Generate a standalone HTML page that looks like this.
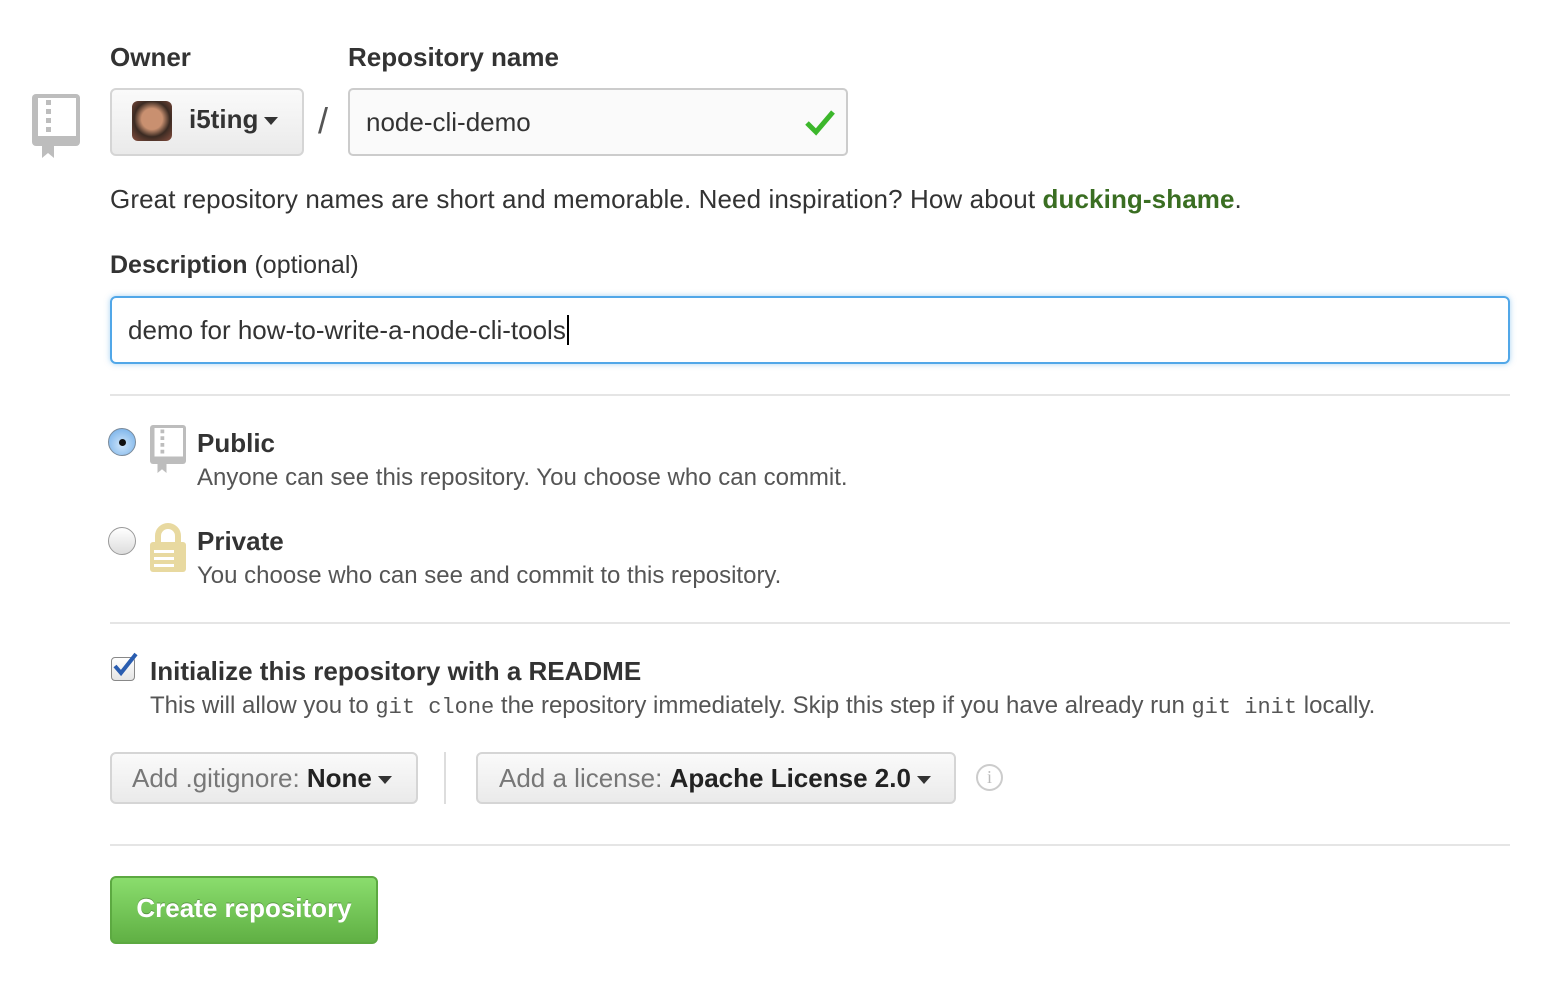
<!DOCTYPE html>
<html><head><meta charset="utf-8"><style>
*{box-sizing:border-box;margin:0;padding:0}
body{width:1566px;height:988px;background:#fff;font-family:"Liberation Sans",sans-serif;color:#333;position:relative;overflow:hidden}
.a{position:absolute;white-space:nowrap}
.b{font-weight:bold}
.btn{position:absolute;border:2px solid #d5d5d5;border-radius:6px;background:linear-gradient(#fafafa,#eaeaea)}
.caret{display:inline-block;width:0;height:0;border-left:7px solid transparent;border-right:7px solid transparent;border-top:8px solid #333;vertical-align:middle;margin-left:6px}
.hr{position:absolute;left:110px;width:1400px;height:2px;background:#e5e5e5}
.mono{font-family:"Liberation Mono",monospace;font-size:22px}
</style></head><body>
<div class="a b" style="left:110px;top:42px;font-size:26px">Owner</div>
<div class="a b" style="left:348px;top:42px;font-size:26px">Repository name</div>
<svg class="a" style="left:32px;top:94px" width="48" height="64" viewBox="0 0 48 64"><rect x="0" y="0" width="48" height="52" rx="4" fill="#bdbdbd"/><rect x="6" y="4" width="38" height="38" fill="#fff"/><rect x="14" y="6" width="5" height="5" fill="#bdbdbd"/><rect x="14" y="15" width="5" height="5" fill="#bdbdbd"/><rect x="14" y="24" width="5" height="5" fill="#bdbdbd"/><rect x="14" y="33" width="5" height="5" fill="#bdbdbd"/><path d="M10 52h12v12l-6-5-6 5z" fill="#bdbdbd"/></svg>
<div class="btn" style="left:110px;top:88px;width:194px;height:68px"></div>
<div class="a" style="left:132px;top:101px;width:40px;height:40px;border-radius:6px;background:radial-gradient(circle at 50% 45%,#c99070 0 35%,#3a2a22 60%,#8a5040)"></div>
<div class="a b" style="left:189px;top:104px;font-size:26px">i5ting<span class="caret"></span></div>
<div class="a" style="left:318px;top:100px;font-size:36px;color:#555">/</div>
<div class="a" style="left:348px;top:88px;width:500px;height:68px;border:2px solid #ccc;border-radius:5px;background:#fafafa"></div>
<div class="a" style="left:366px;top:107px;font-size:26px">node-cli-demo</div>
<svg class="a" style="left:805px;top:108px" width="30" height="28" viewBox="0 0 30 28"><path d="M2 15l9 9L28 4" stroke="#3cb72b" stroke-width="5" fill="none"/></svg>
<div class="a" style="left:110px;top:184px;font-size:26px;letter-spacing:0.1px">Great repository names are short and memorable. Need inspiration? How about <b style="color:#3a6e22">ducking-shame</b>.</div>
<div class="a" style="left:110px;top:251px;font-size:25px"><b>Description</b> (optional)</div>
<div class="a" style="left:110px;top:296px;width:1400px;height:68px;border:2px solid #51a7e8;border-radius:6px;box-shadow:0 0 6px rgba(81,167,232,.5)"></div>
<div class="a" style="left:128px;top:315px;font-size:26px">demo for how-to-write-a-node-cli-tools<span style="border-left:2px solid #000;margin-left:1px"></span></div>
<div class="hr" style="top:394px"></div>
<div class="a" style="left:108px;top:428px;width:28px;height:28px;border-radius:50%;border:1px solid #7a8a9a;background:radial-gradient(circle at 50% 60%,#cfe6fb,#6aa9e6)"><div style="position:absolute;left:10px;top:10px;width:7px;height:7px;border-radius:50%;background:#111"></div></div>
<svg class="a" style="left:150px;top:425px" width="36" height="48" viewBox="0 0 48 64"><rect x="0" y="0" width="48" height="52" rx="4" fill="#bdbdbd"/><rect x="6" y="4" width="38" height="38" fill="#fff"/><rect x="14" y="6" width="5" height="5" fill="#bdbdbd"/><rect x="14" y="15" width="5" height="5" fill="#bdbdbd"/><rect x="14" y="24" width="5" height="5" fill="#bdbdbd"/><rect x="14" y="33" width="5" height="5" fill="#bdbdbd"/><path d="M10 52h12v12l-6-5-6 5z" fill="#bdbdbd"/></svg>
<div class="a b" style="left:197px;top:428px;font-size:26px">Public</div>
<div class="a" style="left:197px;top:464px;font-size:24px;color:#555">Anyone can see this repository. You choose who can commit.</div>
<div class="a" style="left:108px;top:527px;width:28px;height:28px;border-radius:50%;border:1px solid #999;background:linear-gradient(#fff,#ddd)"></div>
<svg class="a" style="left:150px;top:522px" width="36" height="50" viewBox="0 0 36 50"><path d="M8 22V14a10 10 0 0 1 20 0v8" stroke="#e8d9a0" stroke-width="6" fill="none"/><rect x="0" y="20" width="36" height="30" rx="3" fill="#e8d9a0"/><rect x="4" y="28" width="20" height="3" fill="#fff"/><rect x="4" y="35" width="20" height="3" fill="#fff"/><rect x="4" y="42" width="20" height="3" fill="#fff"/></svg>
<div class="a b" style="left:197px;top:526px;font-size:26px">Private</div>
<div class="a" style="left:197px;top:562px;font-size:24px;color:#555">You choose who can see and commit to this repository.</div>
<div class="hr" style="top:622px"></div>
<div class="a" style="left:111px;top:657px;width:24px;height:24px;border:1px solid #888;border-radius:4px;background:linear-gradient(#fff,#e5e5e5)"></div>
<svg class="a" style="left:112px;top:652px" width="26" height="26" viewBox="0 0 26 26"><path d="M3 14l6 7L24 2" stroke="#2a5db0" stroke-width="4" fill="none"/></svg>
<div class="a b" style="left:150px;top:656px;font-size:26px">Initialize this repository with a README</div>
<div class="a" style="left:150px;top:692px;font-size:24px;color:#555">This will allow you to <span class="mono">git clone</span> the repository immediately. Skip this step if you have already run <span class="mono">git init</span> locally.</div>
<div class="btn" style="left:110px;top:752px;width:308px;height:52px"></div>
<div class="a" style="left:132px;top:763px;font-size:26px;color:#777">Add .gitignore: <b style="color:#222">None</b><span class="caret"></span></div>
<div class="a" style="left:444px;top:752px;width:2px;height:52px;background:#ddd"></div>
<div class="btn" style="left:476px;top:752px;width:480px;height:52px"></div>
<div class="a" style="left:499px;top:763px;font-size:26px;color:#777">Add a license: <b style="color:#222">Apache License 2.0</b><span class="caret"></span></div>
<div class="a" style="left:976px;top:764px;width:27px;height:27px;border:2px solid #ccc;border-radius:50%;color:#bbb;font-size:18px;text-align:center;line-height:23px;font-family:'Liberation Serif',serif">i</div>
<div class="hr" style="top:844px"></div>
<div class="a" style="left:110px;top:876px;width:268px;height:68px;border:2px solid #5ca941;border-radius:6px;background:linear-gradient(#8add6d,#60b044)"></div>
<div class="a b" style="left:110px;top:893px;width:268px;text-align:center;font-size:26px;color:#fff;text-shadow:0 -1px 0 rgba(0,0,0,.25)">Create repository</div>
</body></html>
